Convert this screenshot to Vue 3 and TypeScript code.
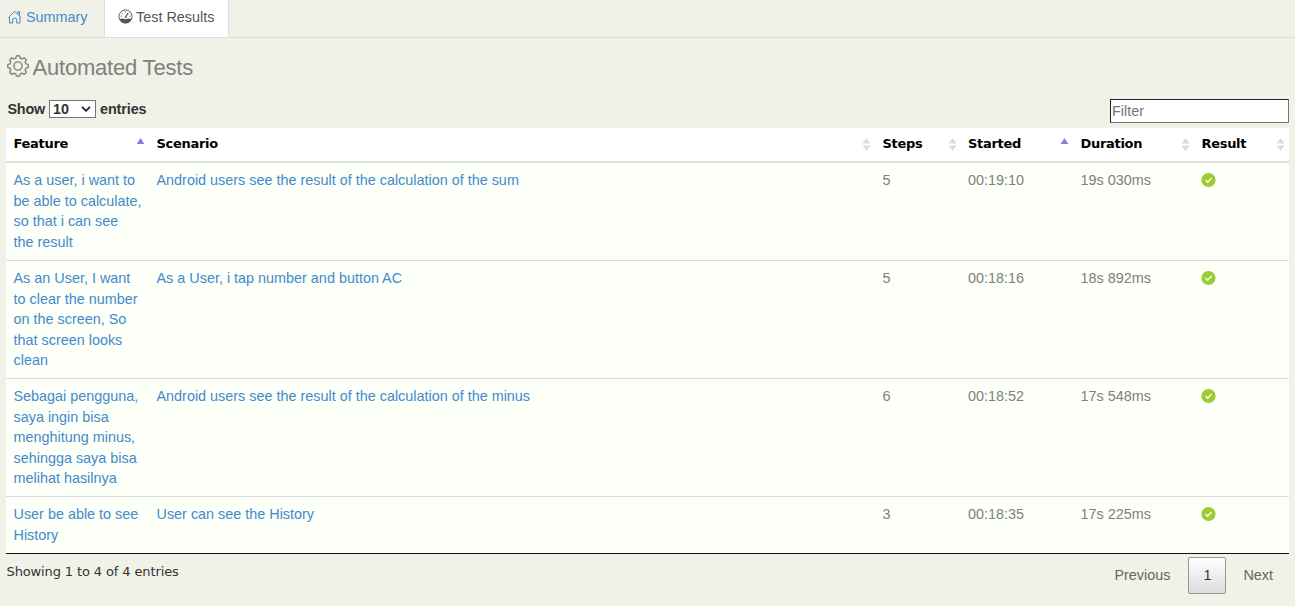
<script setup lang="ts">
interface TestRow {
  feature: string[]
  scenario: string
  steps: number
  started: string
  duration: string
  height: number
}

const columns = [
  { label: 'Feature', key: 'feature', sorted: true },
  { label: 'Scenario', key: 'scenario', sorted: false },
  { label: 'Steps', key: 'steps', sorted: false },
  { label: 'Started', key: 'started', sorted: true },
  { label: 'Duration', key: 'duration', sorted: false },
  { label: 'Result', key: 'result', sorted: false },
]

const rows: TestRow[] = [
  {
    feature: ['As a user, i want to', 'be able to calculate,', 'so that i can see', 'the result'],
    scenario: 'Android users see the result of the calculation of the sum',
    steps: 5, started: '00:19:10', duration: '19s 030ms', height: 97,
  },
  {
    feature: ['As an User, I want', 'to clear the number', 'on the screen, So', 'that screen looks', 'clean'],
    scenario: 'As a User, i tap number and button AC',
    steps: 5, started: '00:18:16', duration: '18s 892ms', height: 118,
  },
  {
    feature: ['Sebagai pengguna,', 'saya ingin bisa', 'menghitung minus,', 'sehingga saya bisa', 'melihat hasilnya'],
    scenario: 'Android users see the result of the calculation of the minus',
    steps: 6, started: '00:18:52', duration: '17s 548ms', height: 118,
  },
  {
    feature: ['User be able to see', 'History'],
    scenario: 'User can see the History',
    steps: 3, started: '00:18:35', duration: '17s 225ms', height: 57,
  },
]
</script>

<template>
  <div class="page">
    <nav class="tabs">
      <a class="tab">
        <svg class="tab-icon home" viewBox="0 0 14 14" fill="none" stroke="currentColor" stroke-width="1">
          <path d="M.6 7.4 6.7 1.3l6.100 6.100M1.500 6.800v6.200H4.700V10a2 2 0 0 1 4 0v3h3.300V6.800M9.800 3.900V1.700h1.700v4" />
        </svg>
        <span>Summary</span>
      </a>
      <a class="tab active">
        <svg class="tab-icon" viewBox="0 0 16 16" fill="none" stroke="currentColor">
          <circle cx="8" cy="8" r="7" stroke-width="1" />
          <path d="M1.500 11Q4 9.700 6.300 10.500q1.700.6 3.400 0 2.300-.8 4.800.5A7 7 0 0 1 8 15.300 7 7 0 0 1 1.500 11Z" fill="currentColor" stroke="none" />
          <path d="m7.400 8.800 2.900-4.500-1.600 5ZM8 2.500v1.200M4.200 4.100l.8.9M2.700 7.700h1.200M13.300 7.700h-1.200M11.800 4.100l-.6.7" stroke-width=".9" />
        </svg>
        <span>Test Results</span>
      </a>
    </nav>

    <main class="content">
      <h1 class="title">
        <svg class="gear" viewBox="0 0 22 22" fill="none" stroke="currentColor" stroke-width="1.4" stroke-linejoin="round">
          <path d="M9.4.9Q11 .5 12.6.9l.6 2.3q.9.2 1.8.8l2.1-1.2q1.4.8 2.2 2.2l-1.2 2.1q.5.8.8 1.8l2.2.5q.4 1.6 0 3.2l-2.2.6q-.2.9-.8 1.8l1.2 2.1q-.8 1.4-2.2 2.2L15 18.1q-.8.5-1.8.8l-.6 2.2q-1.6.4-3.2 0l-.6-2.2q-.9-.2-1.8-.8l-2.1 1.2q-1.4-.8-2.2-2.2L3.900 15q-.5-.8-.8-1.8l-2.2-.6q-.4-1.6 0-3.2l2.2-.5q.2-.9.8-1.8L2.700 5q.8-1.4 2.2-2.2L7 4q.8-.5 1.800-.8Z" />
          <circle cx="11" cy="11" r="4.1" />
        </svg>
        <span>Automated Tests</span>
      </h1>

      <div class="controls">
        <div class="length">
          <span class="show">Show</span>
          <span class="select">
            <span>10</span>
            <svg viewBox="0 0 10 6" fill="none" stroke="#222" stroke-width="1.8"><path d="m1 .8 4 4 4-4" /></svg>
          </span>
          <span>entries</span>
        </div>
        <input class="filter" type="text" placeholder="Filter" />
      </div>

      <table class="results">
        <colgroup>
          <col v-for="col in columns" :key="col.key" :class="'col-' + col.key" />
        </colgroup>
        <thead>
          <tr>
            <th v-for="col in columns" :key="col.key">
              <div class="head">
                <span>{{ col.label }}</span>
                <svg v-if="col.sorted" class="sort" viewBox="0 0 9 13"><path d="M4.5 0 8.3 6H.7Z" fill="#8080dc" /></svg>
                <svg v-else class="sort both" viewBox="0 0 9 13"><path d="M4.5 0 8.5 5.5h-8ZM.5 7.5h8l-4 5.5Z" fill="#dcdcdc" /></svg>
              </div>
            </th>
          </tr>
        </thead>
        <tbody>
          <tr v-for="row in rows" :key="row.started" :style="{ height: row.height + 'px' }">
            <td><a class="link"><span v-for="line in row.feature" :key="line" class="line">{{ line }}</span></a></td>
            <td><a class="link">{{ row.scenario }}</a></td>
            <td>{{ row.steps }}</td>
            <td>{{ row.started }}</td>
            <td>{{ row.duration }}</td>
            <td>
              <svg class="passed" viewBox="0 0 15 15">
                <circle cx="7.5" cy="7" r="7.1" fill="#9acd32" />
                <path d="m4.500 7.100 2.200 2.200 3.900-4.400" fill="none" stroke="#fff" stroke-width="1.4" />
              </svg>
            </td>
          </tr>
        </tbody>
      </table>

      <footer class="footer">
        <div class="info">Showing 1 to 4 of 4 entries</div>
        <div class="pager">
          <a>Previous</a>
          <a class="current">1</a>
          <a>Next</a>
        </div>
      </footer>
    </main>
  </div>
</template>

<style>
body { background: #f0f1e7; }
</style>

<style scoped>
.page {
  height: 606px;
  overflow: hidden;
  background: #f0f1e7;
  color: #808080;
  font: 14.4px/20.57px "Liberation Sans", Arial, sans-serif;
}
.tabs {
  display: flex;
  height: 38px;
  box-sizing: border-box;
  border-bottom: 1px solid #ddd;
}
.tab {
  display: flex;
  align-items: flex-start;
  gap: 3px;
  width: 104px;
  height: 37px;
  box-sizing: border-box;
  padding: 7px 0 0 8px;
  color: #428bca;
  white-space: nowrap;
}
.tab.active {
  width: 125px;
  padding-left: 13px;
  border: solid #ddd;
  border-width: 0 1px;
  background: #fff;
  color: #555;
}
.tab-icon { width: 15px; height: 15px; margin-top: 2px; flex: none; }
.home { width: 14px; height: 14px; margin: 3px 1px 0 0; }
.content { padding: 0 6px; }
.title {
  display: flex;
  align-items: center;
  gap: 5px;
  height: 58px;
  margin: 0;
  font-size: 22px;
  font-weight: 400;
  line-height: 26px;
  letter-spacing: -0.2px;
}
.gear { width: 22px; height: 22px; margin: -3px -0.5px 0 0.5px; overflow: visible; }
.gear + span { margin: 2px 0 0 -0.5px; }
.controls {
  display: flex;
  justify-content: space-between;
  height: 32px;
  padding: 0 0 0 1px;
}
.length {
  display: flex;
  gap: 4px;
  align-items: center;
  height: 26px;
  color: #333;
  font-weight: 700;
  letter-spacing: -0.1px;
}
.show { width: 37.5px; padding-left: 0.5px; letter-spacing: -0.25px; }
.select {
  display: flex;
  align-items: center;
  justify-content: space-between;
  width: 47px;
  height: 18px;
  box-sizing: border-box;
  padding: 0 4px 0 3px;
  border: 1px solid #767676;
  background: #fff;
}
.select svg { width: 10px; height: 6px; }
.filter {
  width: 179px;
  height: 24px;
  margin: 3px 0 0;
  box-sizing: border-box;
  padding: 1px;
  border: 1px solid #767676;
  border-top-color: #222;
  border-left-color: #222;
  border-radius: 0;
  background: #fff;
  font: inherit;
}
.filter::placeholder { color: #757575; }
.results {
  width: 1283px;
  table-layout: fixed;
  border-collapse: separate;
  border-spacing: 0;
  border-bottom: 1px solid #111;
}
.col-feature { width: 143px; }
.col-scenario { width: 726px; }
.col-steps { width: 85.5px; }
.col-started { width: 112.5px; }
.col-duration { width: 121px; }
.col-result { width: 95px; }
th {
  height: 35px;
  box-sizing: border-box;
  padding: 0 4px 1px 7.5px;
  border-bottom: 2px solid #ddd;
  background: #fff;
  color: #000;
  text-align: left;
  font: bold 13px/18px Verdana, "DejaVu Sans", sans-serif;
  letter-spacing: -0.3px;
}
.head { display: flex; align-items: center; justify-content: space-between; height: 18px; }
.head > span { margin-top: -1px; }
.sort { width: 9px; height: 13px; }
.both { margin-top: 1px; }
td {
  box-sizing: border-box;
  padding: 7px 0 0 7.5px;
  border-top: 1px solid #ddd;
  background: #fdfff9;
  vertical-align: top;
  white-space: nowrap;
}
tbody tr:first-child td { border-top: 0; }
.link { color: #428bca; }
.line { display: block; }
.passed { display: block; width: 15px; height: 15px; margin: 3px 0 0 -0.6px; overflow: visible; }
.footer { display: flex; justify-content: space-between; }
.info {
  padding: 8px 0 0 0.5px;
  color: #333;
  font: 13px/20px Verdana, "DejaVu Sans", sans-serif;
  letter-spacing: -0.12px;
}
.pager {
  display: flex;
  padding-top: 3px;
  color: #666;
}
.pager a { padding: 7px 15px; border: 1px solid transparent; line-height: 20px; }
.pager .current {
  width: 36px;
  height: 35px;
  box-sizing: content-box;
  margin: 0 1px 0 2px;
  padding: 0;
  border-color: #979797;
  border-radius: 2px;
  background: linear-gradient(#fff, #dcdcdc);
  color: #333;
  line-height: 35px;
  text-align: center;
}
</style>
